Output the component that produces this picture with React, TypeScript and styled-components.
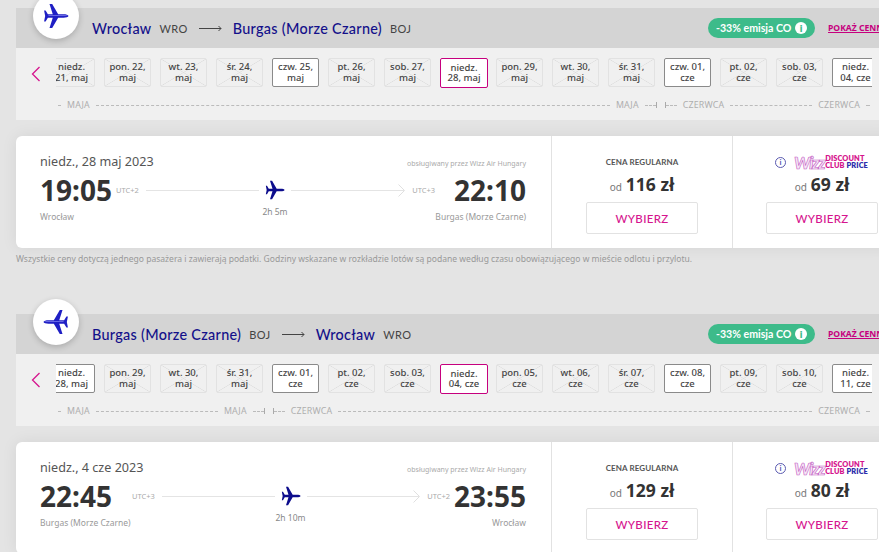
import React from 'react';
import styled, {createGlobalStyle} from 'styled-components';

const GlobalStyle = createGlobalStyle`
  html, body {
    margin: 0;
    height: 100%;
    overflow: hidden;
    background: #e4e4e4;
    font-family: "Noto Sans", sans-serif;
  }
`;

const Page = styled.div`
  width: 896px;
  padding: 8px 0 0 16px;
  box-sizing: border-box;
`;

const Section = styled.section`
  margin-bottom: 49px;
`;

const Header = styled.div`
  position: relative;
  height: 40px;
  background: #d4d4d4;
  display: flex;
  align-items: center;
  padding-left: 76px;
  white-space: nowrap;
`;

const PlaneBadge = styled.div`
  position: absolute;
  left: 17px;
  top: -15px;
  width: 46px;
  height: 46px;
  border-radius: 50%;
  background: white;
  box-shadow: 0 2px 6px rgba(0, 0, 0, 0.2);
  display: flex;
  align-items: center;
  justify-content: center;
`;

const City = styled.span`
  font-family: "Lato", sans-serif;
  font-size: 14.4px;
  font-weight: 500;
  letter-spacing: 0.3px;
  color: #13108a;
`;

const Iata = styled.span`
  font-family: "Lato", sans-serif;
  font-size: 11px;
  letter-spacing: 0.4px;
  color: #444;
  margin-left: 8px;
`;

const RouteArrow = styled.svg`
  margin: 0 11px;
`;

const Emission = styled.div`
  margin-left: auto;
  height: 20px;
  width: 107px;
  box-sizing: border-box;
  padding: 0 8px;
  border-radius: 10px;
  background: #3dbb8a;
  color: white;
  font-family: "Lato", sans-serif;
  font-size: 10.6px;
  font-weight: 700;
  display: flex;
  align-items: center;
  justify-content: space-between;
`;

const InfoDot = styled.span`
  width: 12px;
  height: 12px;
  border-radius: 50%;
  background: white;
  color: #3dbb8a;
  font-size: 10px;
  line-height: 12px;
  text-align: center;
  font-weight: 800;
`;

const PriceLink = styled.a`
  flex: 0 0 68px;
  margin-left: 13px;
  font-size: 8.6px;
  font-weight: 700;
  color: #c6007e;
  text-decoration: underline;
  overflow: hidden;
`;

const Strip = styled.div`
  height: 72px;
  background: #f0f0f0;
  display: grid;
  grid-template-columns: 40px 816px;
  grid-template-rows: 40px 1fr;
  padding-top: 10px;
  box-sizing: border-box;
`;

const Prev = styled.div`
  display: flex;
  align-items: center;
  justify-content: center;
  height: 31px;
`;

const ChipsClip = styled.div`
  overflow: hidden;
`;

const Chips = styled.div`
  display: flex;
  gap: 9px;
  margin-left: -8px;
  width: 900px;
  align-items: flex-start;
`;

const crossed = `
  background:
    linear-gradient(to top right, transparent calc(50% - 0.6px), #dedede, transparent calc(50% + 0.6px)),
    linear-gradient(to bottom right, transparent calc(50% - 0.6px), #dedede, transparent calc(50% + 0.6px));
  border: 1px solid #e2e2e2;
`;

const Chip = styled.div<{$kind: 'off' | 'on' | 'selected'}>`
  flex: 0 0 47px;
  box-sizing: border-box;
  height: ${p => (p.$kind === 'selected' ? 30 : 29)}px;
  ${p => (p.$kind === 'selected' ? 'margin-right: -1px; width: 48px; flex-basis: 48px;' : '')}
  border-radius: 2px;
  display: flex;
  align-items: center;
  justify-content: center;
  text-align: center;
  white-space: pre-line;
  font-size: 9.5px;
  line-height: 10.5px;
  font-weight: 500;
  color: #444;
  ${p => p.$kind === 'off' && crossed}
  ${p => p.$kind === 'on' && 'background: white; border: 1px solid #8a8a8a;'}
  ${p => p.$kind === 'selected' && 'background: white; border: 1px solid #c6007e;'}
`;

const MonthRow = styled.div`
  grid-column: 2;
  display: flex;
  align-items: center;
  height: 12px;
  margin: 1px 0 0 2px;
  width: 812px;
`;

const MonthLabel = styled.span`
  font-size: 8.8px;
  letter-spacing: 0.2px;
  color: #aeaeae;
  margin: 0 6px;
  white-space: nowrap;
`;

const Rule = styled.span<{$width?: number}>`
  ${p => (p.$width ? `flex: 0 0 ${p.$width}px;` : 'flex: 1;')}
  border-top: 1px dashed #bbb;
`;

const Tick = styled.span<{$gap?: number}>`
  flex: none;
  width: 1px;
  height: 6px;
  background: #aaa;
  margin-right: ${p => p.$gap || 0}px;
`;

const Card = styled.div`
  margin-top: 16px;
  height: 112px;
  background: white;
  border-radius: 6px;
  box-shadow: 0 0 16px rgba(0, 0, 0, 0.07);
  display: flex;
`;

const FlightInfo = styled.div`
  flex: 0 0 536px;
  box-sizing: border-box;
  padding: 17px 25px 0 24px;
  border-right: 1px solid #e2e2e2;
`;

const DateRow = styled.div`
  display: flex;
  justify-content: space-between;
  align-items: baseline;
  height: 19px;
`;

const DateText = styled.span`
  font-size: 12.6px;
  color: #555;
`;

const Operator = styled.span`
  font-size: 7px;
  color: #aaa;
`;

const TimesRow = styled.div`
  display: flex;
  align-items: center;
  height: 36px;
`;

const Time = styled.span`
  font-size: 28px;
  font-weight: 700;
  color: #333;
  line-height: 36px;
`;

const Utc = styled.span<{$left: number; $right: number}>`
  font-size: 7.5px;
  color: #aaa;
  margin: 0 ${p => p.$right}px 0 ${p => p.$left}px;
`;

const Line = styled.span`
  flex: 1;
  height: 1px;
  background: #e4e4e4;
  position: relative;
`;

const LineEnd = styled.svg`
  position: absolute;
  right: -1px;
  top: -6px;
`;

const PlaneGap = styled.span`
  margin: 0 6px;
  display: flex;
  position: relative;
`;

const Duration = styled.span`
  position: absolute;
  top: 26px;
  left: 50%;
  transform: translateX(-50%);
  font-size: 8.5px;
  color: #888;
  white-space: nowrap;
`;

const PlacesRow = styled.div`
  display: flex;
  justify-content: space-between;
  margin-top: 3px;
  font-size: 8.5px;
  color: #999;
`;

const Fare = styled.div<{$divider?: boolean}>`
  flex: 0 0 181px;
  box-sizing: border-box;
  ${p => (p.$divider ? 'border-right: 1px solid #e2e2e2;' : 'padding-right: 3px;')}
  padding-top: 18px;
  display: flex;
  flex-direction: column;
  align-items: center;
`;

const FareName = styled.div`
  height: 16px;
  display: flex;
  align-items: center;
  font-family: "Lato", sans-serif;
  font-size: 8px;
  font-weight: 700;
  letter-spacing: 0.1px;
  color: #555;
  white-space: nowrap;
`;

const ClubLogo = styled.span`
  display: flex;
  align-items: center;
  gap: 1px;
  margin-right: 1px;
`;

const WizzMark = styled.span`
  font-family: "Lato", sans-serif;
  font-size: 17px;
  font-weight: 900;
  font-style: italic;
  letter-spacing: -1.4px;
  color: #f6e6f6;
  -webkit-text-stroke: 0.6px #c45bc4;
`;

const ClubText = styled.span`
  font-size: 7.4px;
  line-height: 7.5px;
  font-weight: 800;
  color: #d6158e;
`;

const ClubBlue = styled.span`
  color: #2d2dab;
`;

const InfoOutline = styled.span`
  width: 9px;
  height: 9px;
  border: 1px solid #5a5ab0;
  border-radius: 50%;
  color: #5a5ab0;
  font-size: 8px;
  line-height: 9px;
  text-align: center;
  margin-right: 8px;
`;

const PriceRow = styled.div`
  height: 24px;
  margin-top: 2px;
  display: flex;
  align-items: baseline;
  gap: 4px;
`;

const PriceFrom = styled.span`
  font-size: 10px;
  color: #777;
`;

const PriceValue = styled.span`
  font-size: 17.5px;
  line-height: 24px;
  font-weight: 700;
  color: #333;
`;

const ChooseButton = styled.button`
  margin-top: 6px;
  width: 112px;
  height: 32px;
  background: white;
  border: 1px solid #e2e2e2;
  border-radius: 2px;
  font-family: "Lato", sans-serif;
  font-size: 11.5px;
  font-weight: 500;
  letter-spacing: 0.3px;
  color: #d6158e;
`;

const Note = styled.div`
  margin-top: 6px;
  font-size: 8.55px;
  line-height: 11px;
  color: #999;
  white-space: nowrap;
`;

const PlaneIcon: React.FC<{size: number; color: string; stripe?: string; flip?: boolean}> = ({size, color, stripe, flip}) => (
  <svg width={size} height={size} viewBox="0 0 24 24" style={flip ? {transform: 'scaleX(-1)'} : undefined}>
    <path fill={color} d="M23.5 12c0-1-2.5-1.6-4.5-1.6h-5L8.5 1H6l3 9.4H4.5L2.4 7H1l1 5-1 5h1.4l2.1-3.4H9L6 23h2.5l5.5-9.4h5c2 0 4.5-.6 4.5-1.6z" />
    {stripe && <path fill={stripe} d="M5 11.3h14c2 0 3.5.3 4 .7H5z" />}
  </svg>
);

type ChipData = {label: string; kind: 'off' | 'on' | 'selected'};

const chip = (label: string, kind: ChipData['kind'] = 'off'): ChipData => ({label, kind});

const outboundChips = [
  chip('niedz.\n21, maj'), chip('pon. 22,\nmaj'), chip('wt. 23,\nmaj'), chip('śr. 24,\nmaj'), chip('czw. 25,\nmaj', 'on'),
  chip('pt. 26,\nmaj'), chip('sob. 27,\nmaj'), chip('niedz.\n28, maj', 'selected'), chip('pon. 29,\nmaj'), chip('wt. 30,\nmaj'),
  chip('śr. 31,\nmaj'), chip('czw. 01,\ncze', 'on'), chip('pt. 02,\ncze'), chip('sob. 03,\ncze'), chip('niedz.\n04, cze', 'on'),
];

const returnChips = [
  chip('niedz.\n28, maj', 'on'), chip('pon. 29,\nmaj'), chip('wt. 30,\nmaj'), chip('śr. 31,\nmaj'), chip('czw. 01,\ncze', 'on'),
  chip('pt. 02,\ncze'), chip('sob. 03,\ncze'), chip('niedz.\n04, cze', 'selected'), chip('pon. 05,\ncze'), chip('wt. 06,\ncze'),
  chip('śr. 07,\ncze'), chip('czw. 08,\ncze', 'on'), chip('pt. 09,\ncze'), chip('sob. 10,\ncze'), chip('niedz.\n11, cze', 'on'),
];

type Flight = {
  from: string; fromCode: string; to: string; toCode: string;
  chips: ChipData[]; months: React.ReactNode; flip?: boolean;
  date: string; depart: string; arrive: string; utcFrom: string; utcTo: string;
  leftGap: number; rightGap: number; duration: string; regular: string; club: string;
};

const Month = (name: string) => <MonthLabel>{name}</MonthLabel>;

const flights: Flight[] = [
  {
    from: 'Wrocław', fromCode: 'WRO', to: 'Burgas (Morze Czarne)', toCode: 'BOJ',
    chips: outboundChips,
    months: (
      <>
        <Rule $width={3} />{Month('MAJA')}<Rule $width={514} />{Month('MAJA')}
        <Rule $width={11} /><Tick $gap={8} /><Tick /><Rule $width={11} />{Month('CZERWCA')}
        <Rule />{Month('CZERWCA')}<Rule $width={4} />
      </>
    ),
    date: 'niedz., 28 maj 2023', depart: '19:05', arrive: '22:10', utcFrom: 'UTC+2', utcTo: 'UTC+3',
    leftGap: 4, rightGap: 19, duration: '2h 5m', regular: '116 zł', club: '69 zł',
  },
  {
    from: 'Burgas (Morze Czarne)', fromCode: 'BOJ', to: 'Wrocław', toCode: 'WRO', flip: true,
    chips: returnChips,
    months: (
      <>
        <Rule $width={3} />{Month('MAJA')}<Rule $width={122} />{Month('MAJA')}
        <Rule $width={11} /><Tick $gap={8} /><Tick /><Rule $width={11} />{Month('CZERWCA')}
        <Rule />{Month('CZERWCA')}<Rule $width={4} />
      </>
    ),
    date: 'niedz., 4 cze 2023', depart: '22:45', arrive: '23:55', utcFrom: 'UTC+3', utcTo: 'UTC+2',
    leftGap: 20, rightGap: 4, duration: '2h 10m', regular: '129 zł', club: '80 zł',
  },
];

const App: React.FC = () => (
  <Page>
    <GlobalStyle />
    {flights.map((f, index) => (
      <Section key={f.depart}>
        <Header>
          <PlaneBadge>
            <PlaneIcon size={26} color="#1f1fc4" stripe="#8080ee" flip={f.flip} />
          </PlaneBadge>
          <City>{f.from}</City>
          <Iata>{f.fromCode}</Iata>
          <RouteArrow width="23" height="7" viewBox="0 0 23 7" fill="none" stroke="#444" strokeWidth="1">
            <path d="M0 3.5h22M19.5 1l2.5 2.5L19.5 6" />
          </RouteArrow>
          <City>{f.to}</City>
          <Iata>{f.toCode}</Iata>
          <Emission>-33% emisja CO<InfoDot>i</InfoDot></Emission>
          <PriceLink>POKAŻ CENNIK</PriceLink>
        </Header>
        <Strip>
          <Prev>
            <svg width="10" height="16" viewBox="0 0 10 16" fill="none" stroke="#d6158e" strokeWidth="1.3">
              <path d="M8.5 1L1.5 8l7 7" />
            </svg>
          </Prev>
          <ChipsClip>
            <Chips>
              {f.chips.map(c => <Chip key={c.label} $kind={c.kind}>{c.label}</Chip>)}
            </Chips>
          </ChipsClip>
          <MonthRow>{f.months}</MonthRow>
        </Strip>
        <Card>
          <FlightInfo>
            <DateRow>
              <DateText>{f.date}</DateText>
              <Operator>obsługiwany przez Wizz Air Hungary</Operator>
            </DateRow>
            <TimesRow>
              <Time>{f.depart}</Time>
              <Utc $left={f.leftGap} $right={7}>{f.utcFrom}</Utc>
              <Line />
              <PlaneGap>
                <PlaneIcon size={20} color="#0c0c8c" />
                <Duration>{f.duration}</Duration>
              </PlaneGap>
              <Line>
                <LineEnd width="7" height="13" viewBox="0 0 7 13" fill="none" stroke="#e0e0e0">
                  <path d="M.5.5l6 6-6 6" />
                </LineEnd>
              </Line>
              <Utc $left={8} $right={f.rightGap}>{f.utcTo}</Utc>
              <Time>{f.arrive}</Time>
            </TimesRow>
            <PlacesRow>
              <span>{f.from}</span>
              <span>{f.to}</span>
            </PlacesRow>
          </FlightInfo>
          <Fare $divider>
            <FareName>CENA REGULARNA</FareName>
            <PriceRow><PriceFrom>od</PriceFrom><PriceValue>{f.regular}</PriceValue></PriceRow>
            <ChooseButton>WYBIERZ</ChooseButton>
          </Fare>
          <Fare>
            <FareName>
              <InfoOutline>i</InfoOutline>
              <ClubLogo>
                <WizzMark>Wizz</WizzMark>
                <ClubText>DISCOUNT<br />CLUB <ClubBlue>PRICE</ClubBlue></ClubText>
              </ClubLogo>
            </FareName>
            <PriceRow><PriceFrom>od</PriceFrom><PriceValue>{f.club}</PriceValue></PriceRow>
            <ChooseButton>WYBIERZ</ChooseButton>
          </Fare>
        </Card>
        {index === 0 && (
          <Note>Wszystkie ceny dotyczą jednego pasażera i zawierają podatki. Godziny wskazane w rozkładzie lotów są podane według czasu obowiązującego w mieście odlotu i przylotu.</Note>
        )}
      </Section>
    ))}
  </Page>
);

export default App;
